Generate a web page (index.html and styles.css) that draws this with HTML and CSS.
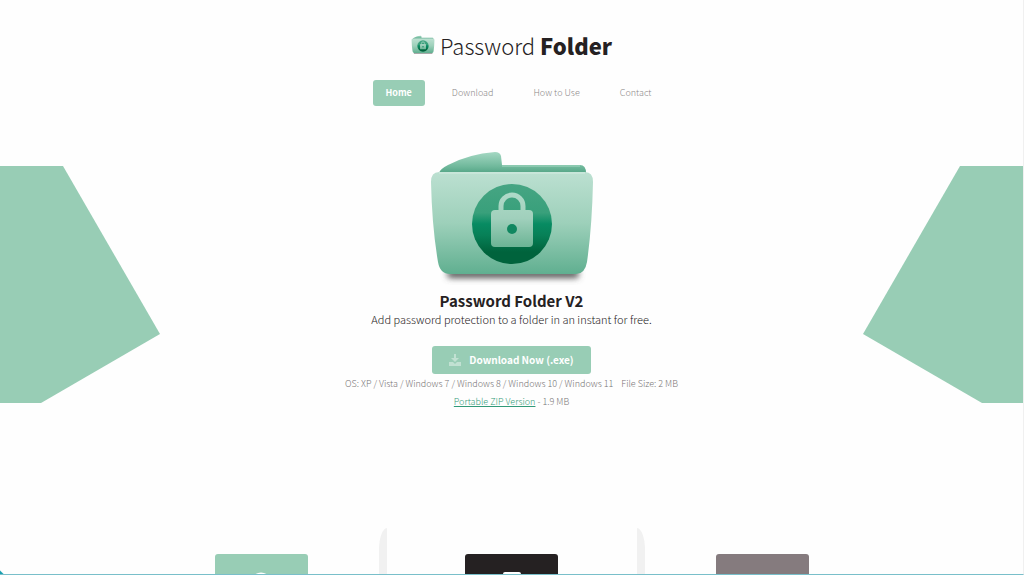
FILE: index.html
```html
<!DOCTYPE html>
<html lang="en">
    <head>
        <meta charset="utf-8">
        <meta name="viewport" content="width=device-width, initial-scale=1">
        <title>Password Folder</title>
        <link rel="stylesheet" href="styles.css">
    </head>
    <body>
        <svg class="defs" aria-hidden="true">
            <defs>
                <linearGradient id="back" gradientUnits="userSpaceOnUse" x1="0" y1="3" x2="0" y2="24">
                    <stop offset="0" stop-color="#a5d8c3" />
                    <stop offset="0.7" stop-color="#6fb89b" />
                    <stop offset="1" stop-color="#54a586" />
                </linearGradient>
                <linearGradient id="front" x1="0" y1="0" x2="0" y2="1">
                    <stop offset="0" stop-color="#bce0d1" />
                    <stop offset="0.5" stop-color="#9dd0ba" />
                    <stop offset="1" stop-color="#60af90" />
                </linearGradient>
                <linearGradient id="disc" x1="0" y1="0" x2="0" y2="1">
                    <stop offset="0" stop-color="#46a583" />
                    <stop offset="0.36" stop-color="#39a07b" />
                    <stop offset="0.5" stop-color="#078b62" />
                    <stop offset="0.64" stop-color="#078057" />
                    <stop offset="0.85" stop-color="#00633c" />
                    <stop offset="1" stop-color="#00633c" />
                </linearGradient>
                <linearGradient id="lock" gradientUnits="userSpaceOnUse" x1="0" y1="42" x2="0" y2="97">
                    <stop offset="0" stop-color="#b0dbc9" />
                    <stop offset="0.5" stop-color="#a0d0bc" />
                    <stop offset="1" stop-color="#6db596" />
                </linearGradient>
                <filter id="soft" x="-10%" y="-100%" width="120%" height="300%">
                    <feGaussianBlur stdDeviation="3" />
                </filter>
            </defs>
            <symbol id="folder" viewBox="0 0 170 136">
                <rect x="20" y="121" width="132" height="8" rx="4" fill="#555" filter="url(#soft)" />
                <path d="M12 24q1-4 9-8Q42 5 68 3q5 0 6 4l1 9h78q6 0 6 8z" fill="url(#back)" />
                <path d="M75 17h78" stroke="#a5d8c3" />
                <path d="M12 23H158q8 0 8 10-1 45-6 80-2 12-11 12H23q-10 0-12-12Q5 78 4 33q0-10 8-10z" fill="url(#front)" />
                <path d="M12 24h146" stroke="#d4ece2" />
                <circle cx="85" cy="75" r="40" fill="url(#disc)" />
                <path d="M74 63V57a11 11 0 0 1 22 0v6" fill="none" stroke="url(#lock)" stroke-width="5" />
                <rect x="64" y="61" width="42" height="37" rx="4" fill="url(#lock)" />
                <circle cx="85" cy="80" r="5" fill="#108760" />
            </symbol>
        </svg>

        <div class="page">
            <header class="header">
                <h1 class="logo">
                    <svg class="logo-icon" aria-hidden="true"><use href="#folder" /></svg>
                    <span>Password <strong>Folder</strong></span>
                </h1>
                <nav class="nav">
                    <a class="nav-link active" href="#home">Home</a>
                    <a class="nav-link" href="#download">Download</a>
                    <a class="nav-link" href="#how-to-use">How to Use</a>
                    <a class="nav-link" href="#contact">Contact</a>
                </nav>
            </header>

            <main class="hero" id="home">
                <div class="shape shape-left"></div>
                <section class="intro">
                    <svg class="intro-icon" aria-hidden="true"><use href="#folder" /></svg>
                    <h2 class="title">Password Folder V2</h2>
                    <p class="tagline">Add password protection to a folder in an instant for free.</p>
                    <a class="button" id="download" href="#exe">
                        <svg class="button-icon" viewBox="0 0 12 12" aria-hidden="true">
                            <path d="M5 0h2v4h3L6 8 2 4h3zM0 8h4l2 2 2-2h4v4H0z" fill="currentColor" />
                        </svg>
                        Download Now (.exe)
                    </a>
                    <p class="meta">
                        <span>OS: XP / Vista / Windows 7 / Windows 8 / Windows 10 / Windows 11</span>
                        <span>File Size: 2 MB</span>
                    </p>
                    <p class="meta"><span><a class="zip" href="#zip">Portable ZIP Version</a> - 1.9 MB</span></p>
                </section>
                <div class="shape shape-right"></div>
            </main>

            <section class="features">
                <div class="feature">
                    <div class="tile green">
                        <svg width="22" height="22" viewBox="0 0 22 22"><circle cx="11" cy="11" r="9" fill="none" stroke="#fff" stroke-width="3" /></svg>
                    </div>
                </div>
                <div class="edge edge-left"></div>
                <div class="feature">
                    <div class="tile black">
                        <svg width="18" height="22" viewBox="0 0 18 22"><rect width="18" height="22" rx="2" fill="#fff" /></svg>
                    </div>
                </div>
                <div class="edge edge-right"></div>
                <div class="feature">
                    <div class="tile grey"></div>
                </div>
            </section>
        </div>
    </body>
</html>
```
FILE: styles.css
```css
:root {
    --green: #98cdb5;
    --dark: #252122;
    --edge: #f1f1f1;
}

* {
    box-sizing: border-box;
}

body {
    margin: 0;
    background: #fefefe;
    color: var(--dark);
    font-family: "Noto Sans CJK SC", "Noto Sans", sans-serif;
    font-weight: 300;
}

h1, h2, p {
    margin: 0;
}

.defs {
    position: absolute;
    width: 0;
    height: 0;
}

.page {
    display: flex;
    flex-direction: column;
    height: 100vh;
    overflow: hidden;
    border-right: 1px solid #f0f0f0;
    border-bottom: 1px solid #79bfca;
    background: linear-gradient(45deg, #1c9fb0 2px, transparent 3px);
}

/** header */
.header {
    display: flex;
    flex-direction: column;
    align-items: center;
    gap: 20px;
    padding-top: 30px;
}

.logo {
    display: flex;
    align-items: center;
    gap: 5px;
    font-size: 22px;
    line-height: 30px;
    font-weight: 300;
}

.logo strong {
    font-weight: 900;
}

.logo-icon {
    width: 24px;
    height: 20px;
}

.nav {
    display: flex;
}

.nav-link {
    margin-left: 14px;
    padding: 0 13px;
    border-radius: 3px;
    color: #8b8788;
    font-size: 9px;
    line-height: 26px;
    text-decoration: none;
}

.nav-link.active {
    background: var(--green);
    color: #fff;
    font-weight: 700;
}

/** hero */
.hero {
    display: grid;
    grid-template-columns: 160px 1fr 160px;
    padding-top: 43px;
}

.shape {
    height: 237px;
    margin-top: 17px;
    background: var(--green);
}

.shape-left {
    clip-path: polygon(0 0, 63px 0, 160px 168px, 41px 100%, 0 100%);
}

.shape-right {
    clip-path: polygon(97px 0, 100% 0, 100% 100%, 119px 100%, 0 168px);
}

.intro {
    display: flex;
    flex-direction: column;
    align-items: center;
}

.intro-icon {
    width: 170px;
    height: 136px;
}

.title {
    margin-top: 6px;
    font-size: 15px;
    line-height: 20px;
    font-weight: 700;
}

.tagline {
    font-size: 11px;
    line-height: 16px;
}

.button {
    display: flex;
    align-items: center;
    gap: 8px;
    margin: 19px 0 1px;
    padding: 0 17px;
    border-radius: 3px;
    background: var(--green);
    color: #fff;
    font-size: 10px;
    line-height: 28px;
    font-weight: 700;
    text-decoration: none;
}

.button-icon {
    width: 12px;
    height: 12px;
    opacity: 0.4;
}

.meta {
    display: flex;
    gap: 8px;
    color: #777374;
    font-size: 9px;
    line-height: 18px;
}

.zip {
    color: #319a78;
}

/** features, running below the fold */
.features {
    display: grid;
    grid-template-columns: 235px 8px 250px 8px 235px;
    justify-content: center;
    flex: 1 0 0;
    min-height: 0;
    padding-top: 117px;
}

.feature {
    display: flex;
    justify-content: center;
    padding-top: 26px;
}

.tile {
    display: flex;
    justify-content: center;
    width: 93px;
    height: 93px;
    padding-top: 18px;
    border-radius: 3px;
}

.green {
    background: var(--green);
}

.black {
    background: var(--dark);
}

.grey {
    background: #857b7e;
}

.edge {
    background: var(--edge);
}

.edge-left {
    border-radius: 8px 0 0 0 / 22px 0 0 0;
}

.edge-right {
    border-radius: 0 8px 0 0 / 0 22px 0 0;
}
```
